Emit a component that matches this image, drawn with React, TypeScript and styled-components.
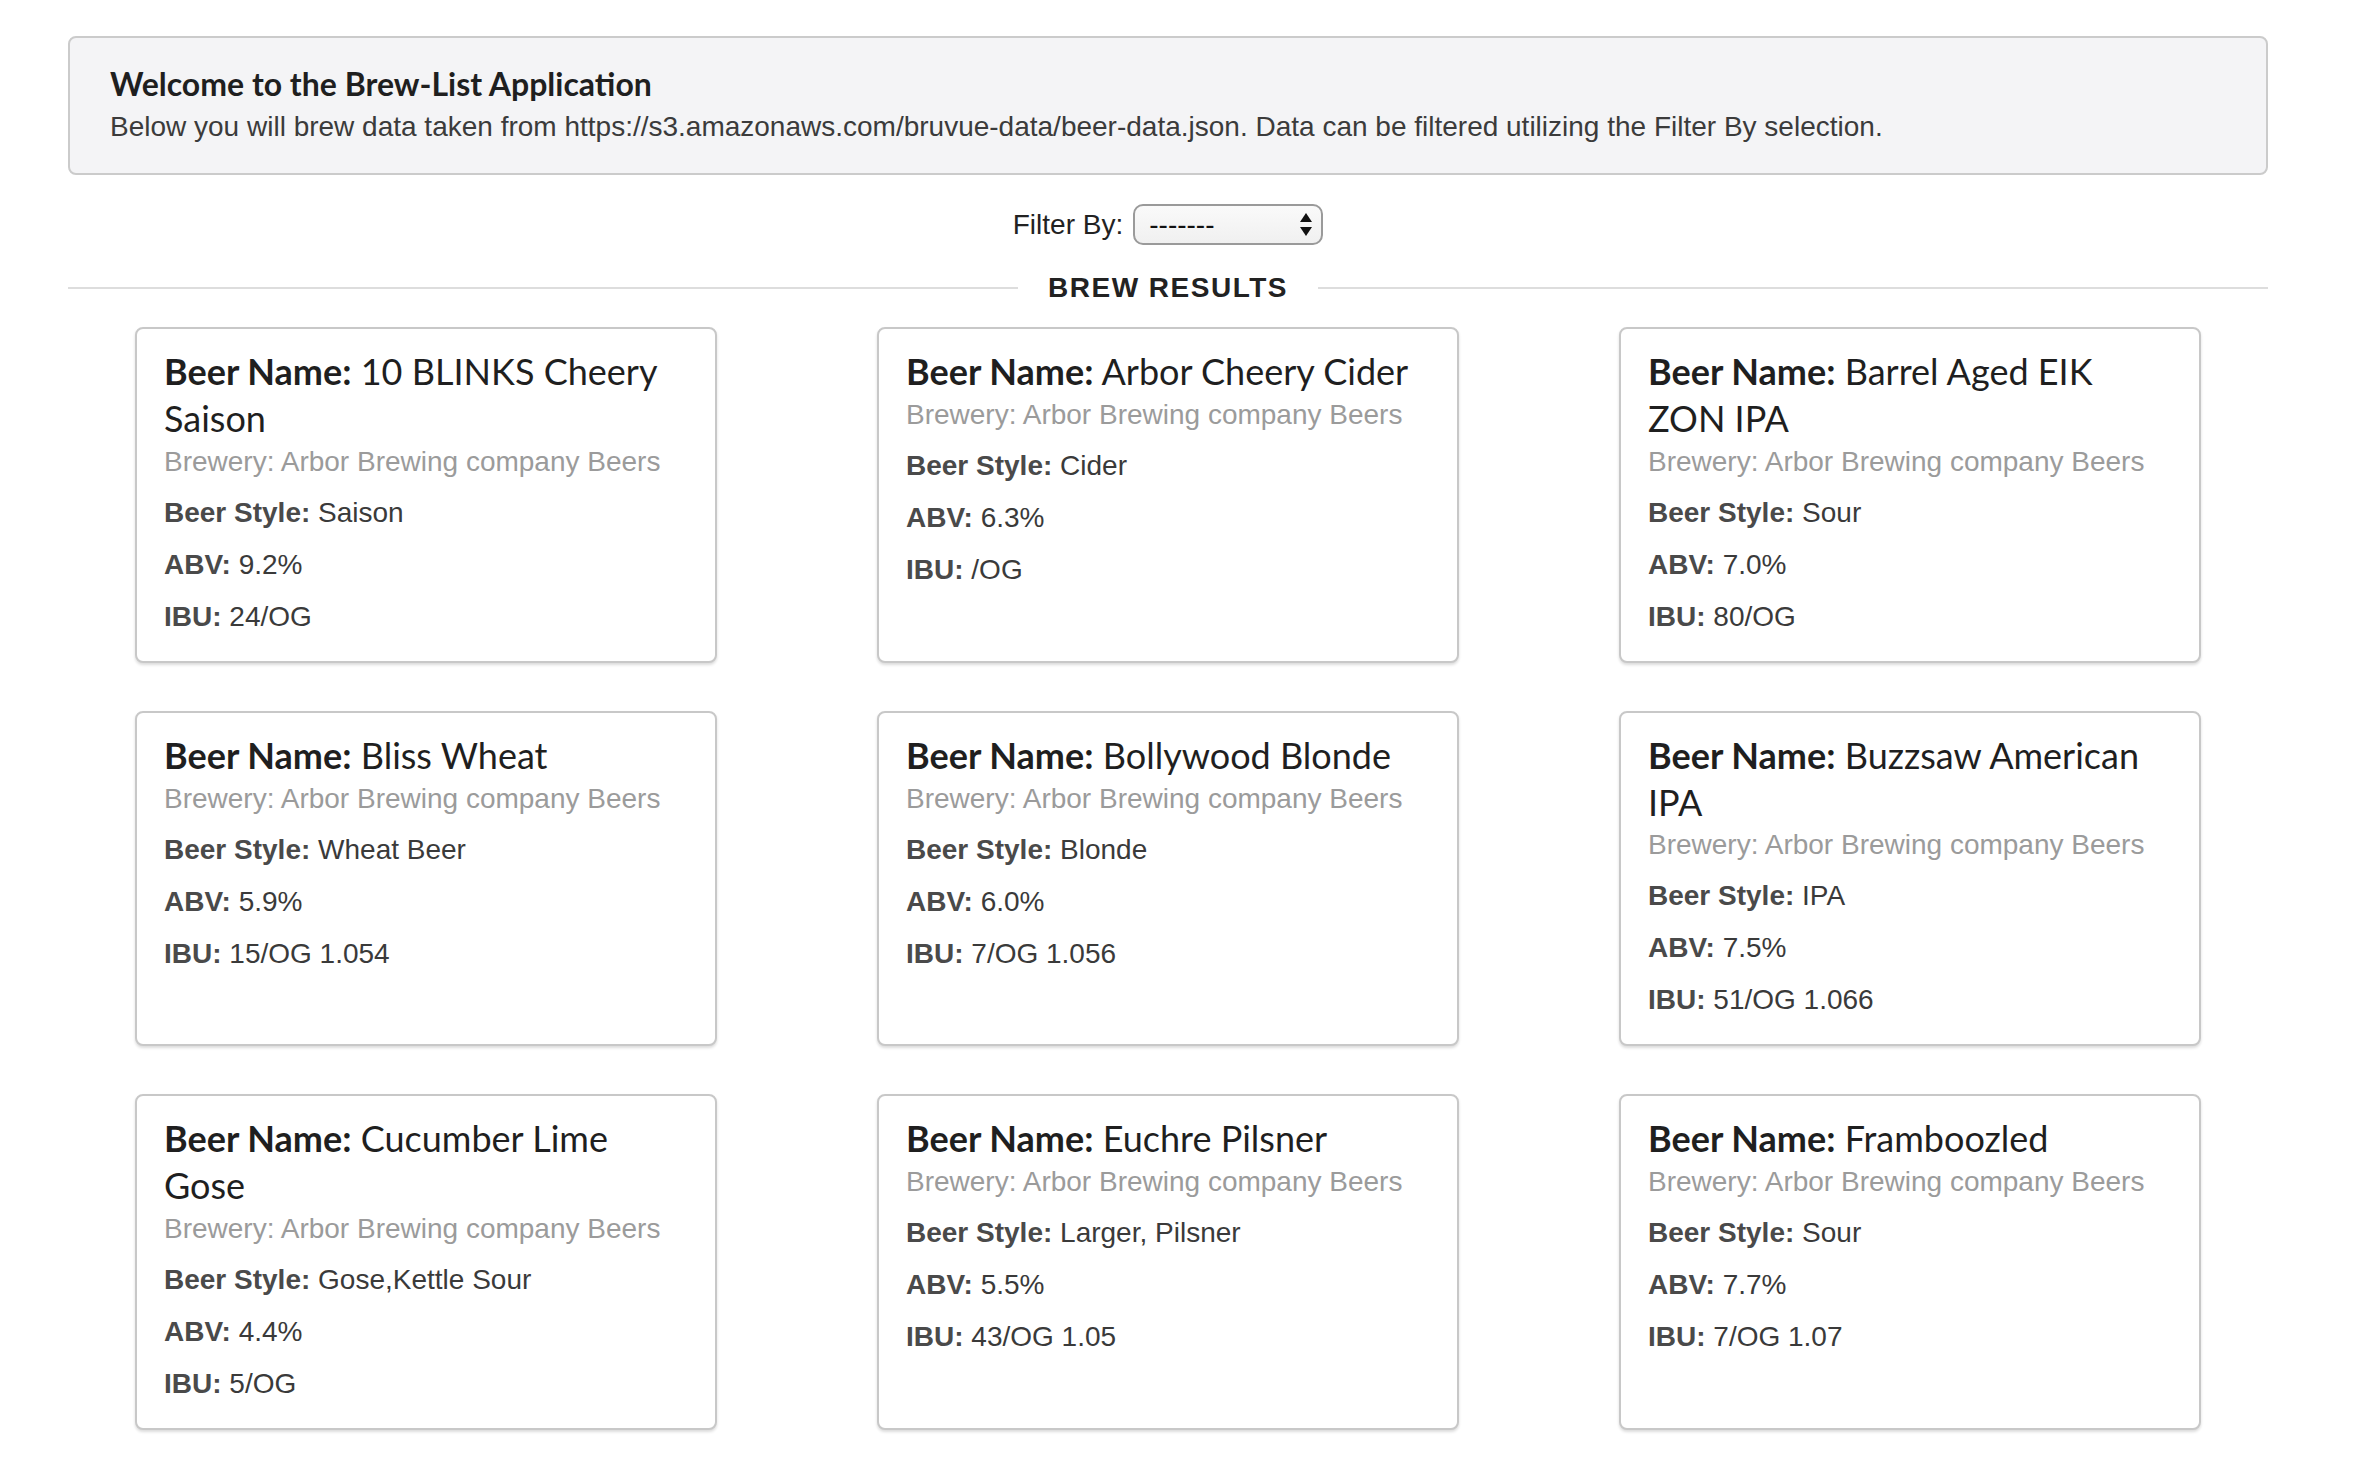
import React from "react";
import styled, { createGlobalStyle } from "styled-components";

const GlobalStyle = createGlobalStyle`
  html, body {
    margin: 0;
    padding: 0;
    background: #ffffff;
  }
  body {
    font-family: "Liberation Sans", Arial, Helvetica, sans-serif;
    color: #333;
  }
  * { box-sizing: border-box; }
`;

const Page = styled.div`
  width: 2200px;
  margin-left: 68px;
  padding-top: 36px;
  padding-bottom: 40px;
`;

const Jumbotron = styled.section`
  background: #f4f4f6;
  border: 2px solid #cbcbcb;
  border-radius: 8px;
  padding: 28px 40px 26px;
`;

const JumboTitle = styled.h1`
  margin: 0 0 6px;
  font-family: Lato, "Liberation Sans", sans-serif;
  font-weight: 700;
  font-size: 32px;
  line-height: 35.2px;
  color: #1f1f1f;
`;

const JumboText = styled.p`
  margin: 0;
  font-size: 28px;
  line-height: 40px;
  color: #3b3b3b;
`;

const FilterRow = styled.div`
  margin-top: 29px;
  display: flex;
  justify-content: center;
  align-items: center;
  gap: 10px;
`;

const FilterLabel = styled.label`
  font-size: 28px;
  line-height: 40px;
  color: #222;
`;

const SelectWrap = styled.div`
  position: relative;
  width: 190px;
  height: 41px;
`;

const Select = styled.select`
  appearance: none;
  -webkit-appearance: none;
  width: 100%;
  height: 100%;
  border: 2px solid #9a9a9a;
  border-radius: 10px;
  background: linear-gradient(#fafafa, #f0f0f0);
  font-family: "Liberation Sans", Arial, sans-serif;
  font-size: 28px;
  color: #111;
  padding: 0 0 0 14px;
  outline: none;
`;

const Arrows = styled.svg`
  position: absolute;
  right: 10px;
  top: 8px;
  pointer-events: none;
`;

const Divider = styled.div`
  margin-top: 27px;
  display: flex;
  align-items: center;
  gap: 30px;
`;

const DividerLine = styled.div`
  flex: 1;
  height: 2px;
  background: #dddddd;
`;

const DividerText = styled.h2`
  margin: 0;
  font-size: 28px;
  line-height: 32px;
  font-weight: 700;
  letter-spacing: 1.5px;
  color: #222;
`;

const CardGrid = styled.div`
  margin-top: 23px;
  padding: 0 67px;
  display: grid;
  grid-template-columns: repeat(3, 582px);
  justify-content: space-between;
  row-gap: 48px;
`;

const Card = styled.article`
  background: #fff;
  border: 2px solid #c8c8c8;
  border-radius: 8px;
  box-shadow: 0 2px 3px rgba(0, 0, 0, 0.14);
  padding: 19px 27px 12px;
`;

const CardTitle = styled.h3`
  margin: 0;
  font-family: Lato, "Liberation Sans", sans-serif;
  font-size: 36px;
  line-height: 46.8px;
  font-weight: 400;
  color: #1f1f1f;
`;

const Strong = styled.strong`
  font-weight: 700;
`;

const Brewery = styled.p`
  margin: 0 0 12px;
  font-size: 28px;
  line-height: 39px;
  color: #9b9b9b;
`;

const Field = styled.p`
  margin: 0 0 12px;
  font-size: 28px;
  line-height: 40px;
  color: #3a3a3a;
`;

const FieldLabel = styled.b`
  font-weight: 700;
  color: #4a4a4a;
`;

type Beer = {
  name: string;
  style: string;
  abv: string;
  ibu: string;
};

const beers: Beer[] = [
  { name: "10 BLINKS Cheery Saison", style: "Saison", abv: "9.2%", ibu: "24/OG" },
  { name: "Arbor Cheery Cider", style: "Cider", abv: "6.3%", ibu: "/OG" },
  { name: "Barrel Aged EIK ZON IPA", style: "Sour", abv: "7.0%", ibu: "80/OG" },
  { name: "Bliss Wheat", style: "Wheat Beer", abv: "5.9%", ibu: "15/OG 1.054" },
  { name: "Bollywood Blonde", style: "Blonde", abv: "6.0%", ibu: "7/OG 1.056" },
  { name: "Buzzsaw American IPA", style: "IPA", abv: "7.5%", ibu: "51/OG 1.066" },
  { name: "Cucumber Lime Gose", style: "Gose,Kettle Sour", abv: "4.4%", ibu: "5/OG" },
  { name: "Euchre Pilsner", style: "Larger, Pilsner", abv: "5.5%", ibu: "43/OG 1.05" },
  { name: "Framboozled", style: "Sour", abv: "7.7%", ibu: "7/OG 1.07" },
];

const BeerCard: React.FC<{ beer: Beer }> = ({ beer }) => (
  <Card>
    <CardTitle>
      <Strong>Beer Name:</Strong> {beer.name}
    </CardTitle>
    <Brewery>Brewery: Arbor Brewing company Beers</Brewery>
    <Field>
      <FieldLabel>Beer Style:</FieldLabel> {beer.style}
    </Field>
    <Field>
      <FieldLabel>ABV:</FieldLabel> {beer.abv}
    </Field>
    <Field>
      <FieldLabel>IBU:</FieldLabel> {beer.ibu}
    </Field>
  </Card>
);

export default function App() {
  return (
    <>
      <GlobalStyle />
      <Page>
        <Jumbotron>
          <JumboTitle>Welcome to the Brew-List Application</JumboTitle>
          <JumboText>
            Below you will brew data taken from https://s3.amazonaws.com/bruvue-data/beer-data.json. Data can be
            filtered utilizing the Filter By selection.
          </JumboText>
        </Jumbotron>

        <FilterRow>
          <FilterLabel htmlFor="filter">Filter By:</FilterLabel>
          <SelectWrap>
            <Select id="filter" defaultValue="none">
              <option value="none">-------</option>
              <option value="style">Beer Style</option>
              <option value="abv">ABV</option>
            </Select>
            <Arrows width="14" height="26" viewBox="0 0 14 26">
              <polygon points="7,1 13,10 1,10" fill="#111" />
              <polygon points="1,15 13,15 7,24" fill="#111" />
            </Arrows>
          </SelectWrap>
        </FilterRow>

        <Divider>
          <DividerLine />
          <DividerText>BREW RESULTS</DividerText>
          <DividerLine />
        </Divider>

        <CardGrid>
          {beers.map((b) => (
            <BeerCard key={b.name} beer={b} />
          ))}
        </CardGrid>
      </Page>
    </>
  );
}
